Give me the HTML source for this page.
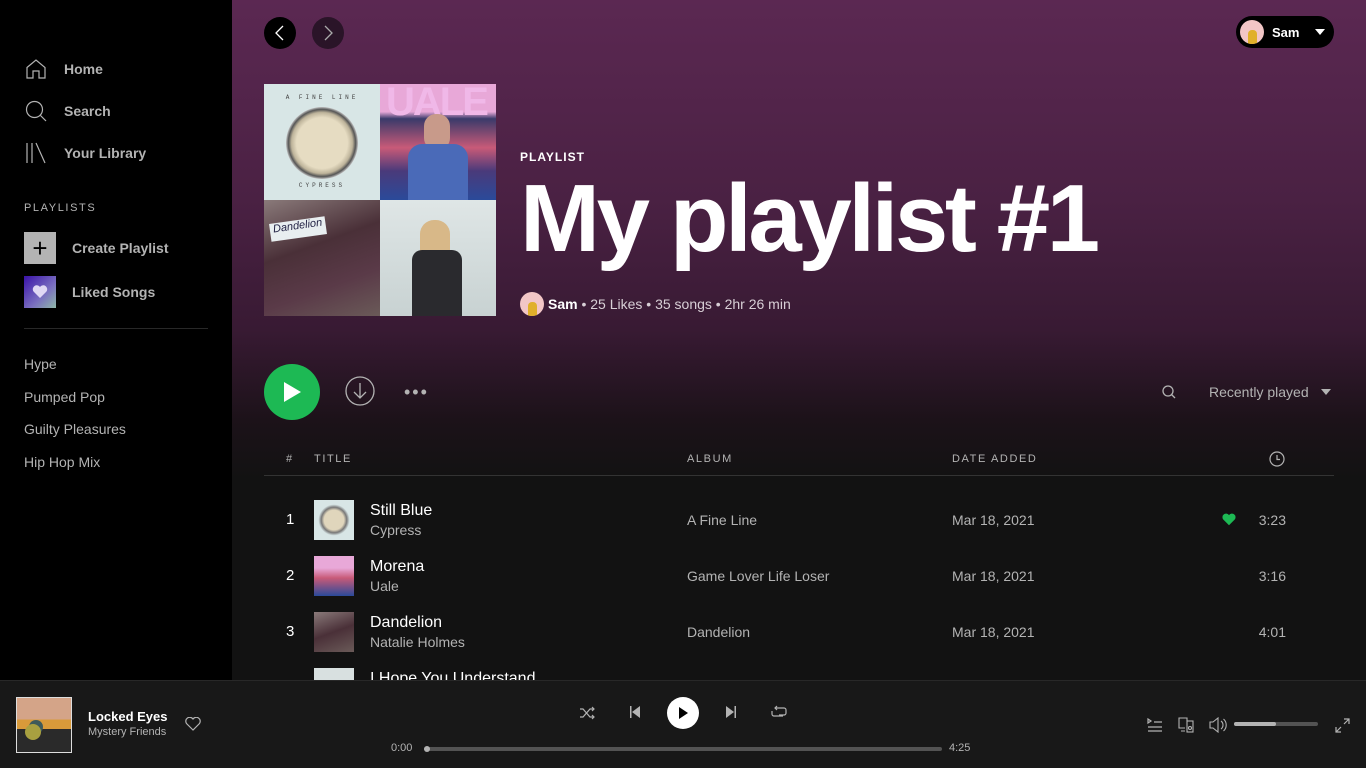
<!DOCTYPE html>
<html><head><meta charset="utf-8"><style>
*{margin:0;padding:0;box-sizing:border-box}
body{width:1366px;height:768px;overflow:hidden;background:#121212;font-family:"Liberation Sans",sans-serif;color:#fff;position:relative}
.side{position:absolute;left:0;top:0;width:232px;height:680px;background:#000}
.nav{position:absolute;left:24px;display:flex;align-items:center;font-size:14px;font-weight:bold;color:#b3b3b3}
.nav svg{margin-right:16px}
.main{position:absolute;left:232px;top:0;width:1134px;height:680px;background:linear-gradient(#5b2852 0px,#4a2143 200px,#381a33 330px,#1c1219 420px,#121212 480px)}
.abs{position:absolute}
.circ{position:absolute;width:32px;height:32px;border-radius:50%;display:flex;align-items:center;justify-content:center}
.hdr{font-size:11px;letter-spacing:1.6px;color:#b3b3b3}
.row{position:absolute;left:32px;width:1070px;height:56px}
.row .n{position:absolute;left:22px;top:19px;font-size:15px;color:#fff}
.row .th{position:absolute;left:50px;top:8px;width:40px;height:40px}
.row .t{position:absolute;left:106px;top:10px;font-size:16px}
.row .a{position:absolute;left:106px;top:30px;font-size:14px;color:#b3b3b3}
.row .al{position:absolute;left:423px;top:20px;font-size:14px;color:#b3b3b3}
.row .d{position:absolute;left:688px;top:20px;font-size:14px;color:#b3b3b3}
.row .du{position:absolute;right:48px;top:20px;font-size:14px;color:#b3b3b3}
.bar{position:absolute;left:0;top:680px;width:1366px;height:88px;background:#181818;border-top:1px solid #282828}
</style></head><body>
<div class="side">
 <div class="nav" style="top:57px"><svg width="24" height="24" viewBox="0 0 24 24" fill="none" stroke="#b3b3b3" stroke-width="1.2"><path d="M3 10.5L12 3l9 7.5V21h-6v-7H9v7H3z"/></svg>Home</div>
 <div class="nav" style="top:99px"><svg width="24" height="24" viewBox="0 0 24 24" fill="none" stroke="#b3b3b3" stroke-width="1.2"><circle cx="10.5" cy="10.5" r="8"/><path d="M16.5 16.5L22 22"/></svg>Search</div>
 <div class="nav" style="top:141px"><svg width="24" height="24" viewBox="0 0 24 24" fill="none" stroke="#b3b3b3" stroke-width="1.2"><path d="M3 2v20M8 2v20M12 2l9 20"/></svg>Your Library</div>
 <div class="abs hdr" style="left:24px;top:202px">PLAYLISTS</div>
 <div class="abs" style="left:24px;top:232px;width:32px;height:32px;background:#b3b3b3;display:flex;align-items:center;justify-content:center;color:#000;font-size:26px;line-height:1">+</div>
 <div class="abs" style="left:72px;top:240px;font-size:14px;font-weight:bold;color:#b3b3b3">Create Playlist</div>
 <div class="abs" style="left:24px;top:276px;width:32px;height:32px;background:linear-gradient(135deg,#3a12a8,#7a6fc0 60%,#8fb8a8);display:flex;align-items:center;justify-content:center"><svg width="16" height="14" viewBox="0 0 16 14"><path d="M8 13L1.5 6.5A3.5 3.5 0 0 1 8 2a3.5 3.5 0 0 1 6.5 4.5z" fill="#e0d8f4"/></svg></div>
 <div class="abs" style="left:72px;top:284px;font-size:14px;font-weight:bold;color:#b3b3b3">Liked Songs</div>
 <div class="abs" style="left:24px;top:328px;width:184px;height:1px;background:#282828"></div>
 <div class="abs" style="left:24px;top:348px;font-size:14px;color:#b3b3b3;line-height:32.5px">Hype<br>Pumped Pop<br>Guilty Pleasures<br>Hip Hop Mix</div>
</div>
<div class="main">
 <div class="circ" style="left:32px;top:17px;background:#000"><svg width="12" height="16" viewBox="0 0 12 16" fill="none" stroke="#fff" stroke-width="1.3"><path d="M9 1L2 8l7 7"/></svg></div>
 <div class="circ" style="left:80px;top:17px;background:#2a1428"><svg width="12" height="16" viewBox="0 0 12 16" fill="none" stroke="#aaa" stroke-width="1.3"><path d="M3 1l7 7-7 7"/></svg></div>
 <div class="abs" style="left:1004px;top:16px;width:98px;height:32px;border-radius:16px;background:#000;display:flex;align-items:center">
  <div style="width:24px;height:24px;border-radius:50%;background:#f2c6c6;margin-left:4px;overflow:hidden;position:relative"><div style="position:absolute;left:8px;top:10px;width:9px;height:14px;background:#e0b02a;border-radius:4px 4px 0 0"></div></div>
  <span style="font-size:13px;font-weight:bold;margin-left:8px">Sam</span>
  <svg width="10" height="6" viewBox="0 0 10 6" style="margin-left:16px"><path d="M0 0h10L5 6z" fill="#fff"/></svg></div>
 <div class="abs" style="left:32px;top:84px;width:232px;height:232px">
  <div class="abs" style="left:0;top:0;width:116px;height:116px;background:#d8e6e6">
   <div class="abs" style="left:0;top:10px;width:116px;text-align:center;font-size:6px;letter-spacing:3px;color:#444;font-family:'Liberation Mono',monospace">A FINE LINE</div>
   <div class="abs" style="left:22px;top:23px;width:72px;height:72px;border-radius:50%;background:radial-gradient(#e6dcc2 50%,#bdb39a 60%,#555 66%,#ddd 72%,#888 80%,#d8e6e6 82%)"></div>
   <div class="abs" style="left:0;top:98px;width:116px;text-align:center;font-size:6px;letter-spacing:3px;color:#444;font-family:'Liberation Mono',monospace">CYPRESS</div>
  </div>
  <div class="abs" style="left:116px;top:0;width:116px;height:116px;background:linear-gradient(#e8a8d8 0,#e8a8d8 24%,#3a3a6a 30%,#c85a78 55%,#4a3a7a 75%,#2a4a9a)">
   <div class="abs" style="left:6px;top:-4px;font-size:40px;font-weight:bold;color:#f0b8e8;letter-spacing:-2px">UALE</div>
   <div class="abs" style="left:44px;top:30px;width:26px;height:36px;border-radius:12px;background:#c89a8a"></div>
   <div class="abs" style="left:28px;top:60px;width:60px;height:56px;border-radius:14px 14px 0 0;background:#4a6ab8"></div></div>
  <div class="abs" style="left:0;top:116px;width:116px;height:116px;background:linear-gradient(160deg,#8a7a7a,#4a3038 40%,#5a3a48 70%,#6a5a58)">
   <div class="abs" style="left:6px;top:20px;width:56px;height:18px;background:#e8eef0;transform:rotate(-8deg);font-size:11px;color:#224;font-style:italic;text-align:center">Dandelion</div></div>
  <div class="abs" style="left:116px;top:116px;width:116px;height:116px;background:linear-gradient(#dfe6e6,#c8d2d2)">
   <div class="abs" style="left:40px;top:20px;width:30px;height:40px;background:#d8b888;border-radius:14px 14px 4px 4px"></div>
   <div class="abs" style="left:32px;top:50px;width:50px;height:66px;background:#2a2a2e;border-radius:10px 10px 0 0"></div></div>
 </div>
 <div class="abs" style="left:288px;top:150px;font-size:12px;font-weight:bold;letter-spacing:1px">PLAYLIST</div>
 <div class="abs" style="left:288px;top:161px;font-size:96px;font-weight:bold;letter-spacing:-3.4px;line-height:115px">My playlist #1</div>
 <div class="abs" style="left:288px;top:292px;display:flex;align-items:center;font-size:14px;color:#d8cfd6">
  <div style="width:24px;height:24px;border-radius:50%;background:#f2c6c6;margin-right:4px;position:relative;overflow:hidden"><div style="position:absolute;left:8px;top:10px;width:9px;height:14px;background:#e0b02a;border-radius:4px 4px 0 0"></div></div>
  <b style="color:#fff">Sam</b>&nbsp;• 25 Likes • 35 songs • 2hr 26 min</div>
 <div class="abs" style="left:32px;top:364px;width:56px;height:56px;border-radius:50%;background:#1db954;display:flex;align-items:center;justify-content:center"><svg width="20" height="22" viewBox="0 0 20 22"><path d="M2 1l17 10L2 21z" fill="#fff"/></svg></div>
 <svg class="abs" style="left:113px;top:376px" width="30" height="30" viewBox="0 0 30 30" fill="none" stroke="#b3b3b3" stroke-width="1.3"><circle cx="15" cy="15" r="14"/><path d="M15 7v15M9 16l6 6 6-6"/></svg>
 <div class="abs" style="left:172px;top:382px;font-size:18px;color:#b3b3b3;letter-spacing:2px">•••</div>
 <svg class="abs" style="left:930px;top:385px" width="14" height="14" viewBox="0 0 14 14" fill="none" stroke="#b3b3b3" stroke-width="1.3"><circle cx="6" cy="6" r="5"/><path d="M9.5 9.5L13 13"/></svg>
 <div class="abs" style="left:977px;top:384px;font-size:14px;color:#b3b3b3">Recently played</div>
 <svg class="abs" style="left:1089px;top:389px" width="10" height="6" viewBox="0 0 10 6"><path d="M0 0h10L5 6z" fill="#b3b3b3"/></svg>
 <div class="abs hdr" style="left:54px;top:453px">#</div>
 <div class="abs hdr" style="left:82px;top:453px">TITLE</div>
 <div class="abs hdr" style="left:455px;top:453px">ALBUM</div>
 <div class="abs hdr" style="left:720px;top:453px">DATE ADDED</div>
 <svg class="abs" style="left:1037px;top:451px" width="16" height="16" viewBox="0 0 16 16" fill="none" stroke="#b3b3b3" stroke-width="1.2"><circle cx="8" cy="8" r="7"/><path d="M8 4v4.5h3"/></svg>
 <div class="abs" style="left:32px;top:475px;width:1070px;height:1px;background:#333"></div>
 <div class="row" style="top:492px"><div class="n">1</div><div class="th" style="background:radial-gradient(#e0d6bc 35%,#777 45%,#d8e6e6 55%)"></div><div class="t">Still Blue</div><div class="a">Cypress</div><div class="al">A Fine Line</div><div class="d">Mar 18, 2021</div>
  <svg class="abs" style="right:98px;top:21px" width="14" height="13" viewBox="0 0 16 14"><path d="M8 13.5L1.3 6.8A3.7 3.7 0 0 1 8 2a3.7 3.7 0 0 1 6.7 4.8z" fill="#1db954"/></svg><div class="du">3:23</div></div>
 <div class="row" style="top:548px"><div class="n">2</div><div class="th" style="background:linear-gradient(#e8a8d8 0,#e8a8d8 30%,#c85a78 55%,#2a4a9a)"></div><div class="t">Morena</div><div class="a">Uale</div><div class="al">Game Lover Life Loser</div><div class="d">Mar 18, 2021</div><div class="du">3:16</div></div>
 <div class="row" style="top:604px"><div class="n">3</div><div class="th" style="background:linear-gradient(160deg,#8a7a7a,#4a3038 50%,#6a5a58)"></div><div class="t">Dandelion</div><div class="a">Natalie Holmes</div><div class="al">Dandelion</div><div class="d">Mar 18, 2021</div><div class="du">4:01</div></div>
 <div class="row" style="top:660px"><div class="th" style="background:#d8e0e0"></div><div class="t">I Hope You Understand</div></div>
</div>
<div class="bar">
 <div class="abs" style="left:16px;top:16px;width:56px;height:56px;border:1px solid #ddd;background:linear-gradient(#d4a488 0,#d4a488 40%,#d89a3a 40%,#d89a3a 57%,#2a2a2a 57%)">
  <div class="abs" style="left:12px;top:22px;width:14px;height:14px;border-radius:50%;background:#3e5a5a"></div>
  <div class="abs" style="left:8px;top:26px;width:16px;height:16px;border-radius:50%;background:#a8a040"></div></div>
 <div class="abs" style="left:88px;top:28px;font-size:13px;font-weight:bold">Locked Eyes</div>
 <div class="abs" style="left:88px;top:45px;font-size:11px;color:#b3b3b3">Mystery Friends</div>
 <svg class="abs" style="left:185px;top:36px" width="16" height="14" viewBox="0 0 16 14" fill="none" stroke="#b3b3b3" stroke-width="1.2"><path d="M8 13L1.5 6.5A3.5 3.5 0 0 1 8 2a3.5 3.5 0 0 1 6.5 4.5z"/></svg>
 <svg class="abs" style="left:579px;top:25px" width="16" height="14" viewBox="0 0 16 14" fill="none" stroke="#b3b3b3" stroke-width="1.2"><path d="M1 3h3l7 8h4M1 11h3l7-8h4M13 1l2 2-2 2M13 9l2 2-2 2"/></svg>
 <svg class="abs" style="left:629px;top:25px" width="12" height="12" viewBox="0 0 12 12" fill="#b3b3b3"><rect x="1" y="0" width="1.5" height="12"/><path d="M11 0v12L3 6z"/></svg>
 <div class="abs" style="left:667px;top:16px;width:32px;height:32px;border-radius:50%;background:#fff;display:flex;align-items:center;justify-content:center"><svg width="12" height="14" viewBox="0 0 12 14"><path d="M2 1l9 6-9 6z" fill="#000"/></svg></div>
 <svg class="abs" style="left:725px;top:25px" width="12" height="12" viewBox="0 0 12 12" fill="#b3b3b3"><rect x="9.5" y="0" width="1.5" height="12"/><path d="M1 0v12l8-6z"/></svg>
 <svg class="abs" style="left:771px;top:24px" width="16" height="14" viewBox="0 0 16 14" fill="none" stroke="#b3b3b3" stroke-width="1.2"><path d="M4 3h9a2 2 0 0 1 2 2v3a2 2 0 0 1-2 2H8M6 1l-2 2 2 2M12 11H3a2 2 0 0 1-2-2V6"/></svg>
 <div class="abs" style="left:391px;top:61px;font-size:11px;color:#b3b3b3">0:00</div>
 <div class="abs" style="left:424px;top:66px;width:518px;height:4px;border-radius:2px;background:#535353"></div>
 <div class="abs" style="left:424px;top:65px;width:6px;height:6px;border-radius:50%;background:#b3b3b3"></div>
 <div class="abs" style="left:949px;top:61px;font-size:11px;color:#b3b3b3">4:25</div>
 <svg class="abs" style="left:1147px;top:37px" width="16" height="14" viewBox="0 0 16 14" fill="none" stroke="#b3b3b3" stroke-width="1.2"><path d="M1 1v4l3-2zM7 4h8M1 9h14M1 13h14" /></svg>
 <svg class="abs" style="left:1178px;top:36px" width="16" height="16" viewBox="0 0 16 16" fill="none" stroke="#b3b3b3" stroke-width="1.1"><path d="M7 11H1V1h8v3M3 14h4"/><rect x="9" y="4" width="6" height="11"/><circle cx="12" cy="11" r="1.5"/></svg>
 <svg class="abs" style="left:1209px;top:36px" width="18" height="16" viewBox="0 0 18 16" fill="none" stroke="#b3b3b3" stroke-width="1.1"><path d="M1 5h3l5-4v14l-5-4H1zM12 4a5 5 0 0 1 0 8M14.5 2a8 8 0 0 1 0 12"/></svg>
 <div class="abs" style="left:1234px;top:41px;width:84px;height:4px;border-radius:2px;background:#535353"></div>
 <div class="abs" style="left:1234px;top:41px;width:42px;height:4px;border-radius:2px;background:#b3b3b3"></div>
 <svg class="abs" style="left:1335px;top:37px" width="15" height="15" viewBox="0 0 15 15" fill="none" stroke="#b3b3b3" stroke-width="1.2"><path d="M9 1h5v5M14 1L9 6M6 14H1V9M1 14l5-5"/></svg>
</div>
</body></html>
